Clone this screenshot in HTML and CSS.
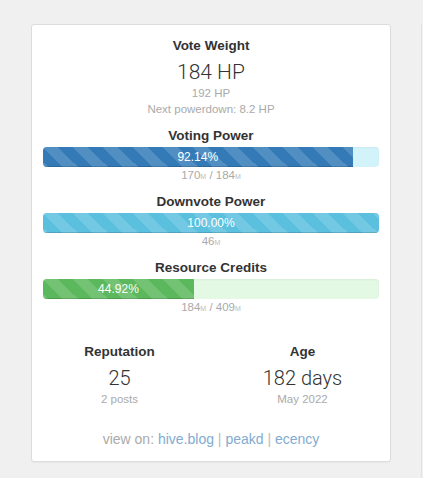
FILE: index.html
```html
<!DOCTYPE html>
<html>
<head>
<meta charset="utf-8">
<link rel="stylesheet" href="styles.css">
</head>
<body>
<div class="page">
  <div class="card">
    <div class="vote">
      <div class="title">Vote Weight</div>
      <div class="big">184 HP</div>
      <div class="small">192 HP</div>
      <div class="small">Next powerdown: 8.2 HP</div>
    </div>

    <div class="meter">
      <div class="title">Voting Power</div>
      <div class="track track-blue">
        <div class="fill fill-blue" style="width:92.14%">92.14%</div>
      </div>
      <div class="sub">170<span class="unit">M</span> / 184<span class="unit">M</span></div>
    </div>

    <div class="meter">
      <div class="title">Downvote Power</div>
      <div class="track track-blue">
        <div class="fill fill-info" style="width:100%">100.00%</div>
      </div>
      <div class="sub">46<span class="unit">M</span></div>
    </div>

    <div class="meter">
      <div class="title">Resource Credits</div>
      <div class="track track-green">
        <div class="fill fill-green" style="width:44.92%">44.92%</div>
      </div>
      <div class="sub">184<span class="unit">M</span> / 409<span class="unit">M</span></div>
    </div>

    <div class="stats">
      <div class="stat">
        <div class="title">Reputation</div>
        <div class="big">25</div>
        <div class="small">2 posts</div>
      </div>
      <div class="stat">
        <div class="title">Age</div>
        <div class="big">182 days</div>
        <div class="small">May 2022</div>
      </div>
    </div>

    <div class="links">view on: <a href="#">hive.blog</a> <span class="sep">|</span> <a href="#">peakd</a> <span class="sep">|</span> <a href="#">ecency</a></div>
  </div>
  <div class="next"></div>
</div>
</body>
</html>
```

FILE: styles.css
```css
html, body {
  margin: 0;
  padding: 0;
  background: #f0f0f0;
  height: 100%;
  overflow: hidden;
}

.page {
  display: flex;
  gap: 30px;
  padding: 24px 0 0 31px;
  height: 100%;
  box-sizing: border-box;
  font-family: "Liberation Sans", Arial, sans-serif;
  color: #333;
}

.card {
  width: 360px;
  height: 438px;
  flex: none;
  box-sizing: border-box;
  background: #fff;
  border: 1px solid #dcdcdc;
  border-radius: 3px;
  box-shadow: 0 1px 1px rgba(0,0,0,0.04);
  padding: 12px 11px 0 11px;
  text-align: center;
}

.next {
  flex: none;
  width: 1px;
  border-left: 1px solid #e2e2e2;
  background: #f0f0f0;
}

.title {
  font-size: 13.5px;
  font-weight: bold;
  line-height: 18px;
  color: #333;
}

.big {
  font-family: Roboto, "Liberation Sans", sans-serif;
  font-weight: 300;
  font-size: 21px;
  line-height: 26px;
  margin-top: 4px;
  color: #333;
}

.small {
  font-size: 11.5px;
  line-height: 16px;
  color: #aaa;
}

.vote {
  margin-bottom: 10px;
}

.meter {
  margin-bottom: 8px;
}

.meter .title {
  margin-bottom: 2px;
}

.track {
  height: 20px;
  border-radius: 4px;
  overflow: hidden;
  display: flex;
  box-shadow: inset 0 1px 2px rgba(0,0,0,0.05);
}

.track-blue { background: #d3f3fb; }
.track-green { background: #e3f9e3; }

.fill {
  height: 100%;
  color: #fff;
  font-size: 12px;
  line-height: 20px;
  text-align: center;
  box-shadow: inset 0 -1px 0 rgba(0,0,0,0.15);
  background-image: linear-gradient(45deg, rgba(255,255,255,0.15) 25%, transparent 25%, transparent 50%, rgba(255,255,255,0.15) 50%, rgba(255,255,255,0.15) 75%, transparent 75%, transparent);
  background-size: 30px 30px;
}

.fill-blue { background-color: #337ab7; }
.fill-info { background-color: #5bc0de; }
.fill-green { background-color: #5cb85c; }

.sub {
  font-size: 11.5px;
  line-height: 17px;
  color: #aaa;
}

.unit {
  font-size: 7px;
  color: #bbb;
}

.stats {
  display: grid;
  grid-template-columns: 1fr 1fr;
  margin: 26px -15px 0 -15px;
}

.stats .big {
  font-size: 20px;
}

.links {
  margin-top: 23px;
  font-size: 14px;
  line-height: 18px;
  color: #aaa;
}

.links a {
  color: #82abd0;
  text-decoration: none;
}

.links .sep {
  color: #bbb;
}
```
